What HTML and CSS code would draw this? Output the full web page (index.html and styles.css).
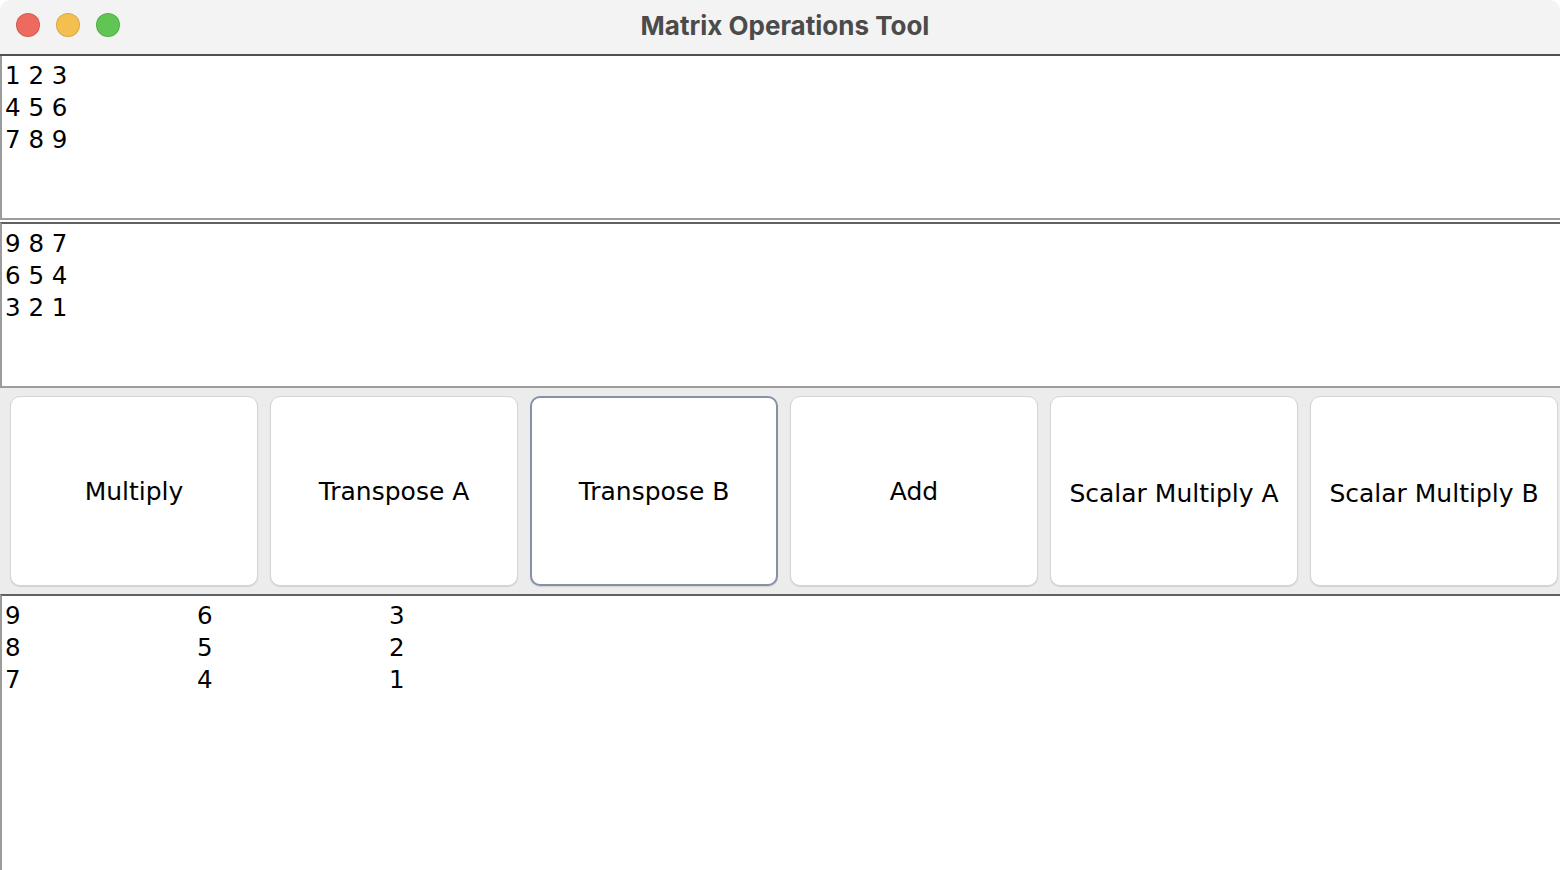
FILE: index.html
```html
<!DOCTYPE html>
<html lang="en">
<head>
  <meta charset="UTF-8">
  <title>Matrix Operations Tool</title>
  <link rel="stylesheet" href="styles.css">
</head>
<body>
  <div class="window">
    <header class="titlebar">
      <div class="lights">
        <span class="light red"></span>
        <span class="light yellow"></span>
        <span class="light green"></span>
      </div>
      <h1>Matrix Operations Tool</h1>
    </header>
    <div class="area area-a">
      <div>1 2 3</div>
      <div>4 5 6</div>
      <div>7 8 9</div>
    </div>
    <div class="area area-b">
      <div>9 8 7</div>
      <div>6 5 4</div>
      <div>3 2 1</div>
    </div>
    <div class="buttons">
      <button>Multiply</button>
      <button>Transpose A</button>
      <button class="focused">Transpose B</button>
      <button>Add</button>
      <button class="low">Scalar Multiply A</button>
      <button class="low">Scalar Multiply B</button>
    </div>
    <div class="area result">
      <div class="row"><span>9</span><span>6</span><span>3</span></div>
      <div class="row"><span>8</span><span>5</span><span>2</span></div>
      <div class="row"><span>7</span><span>4</span><span>1</span></div>
    </div>
  </div>
</body>
</html>
```

FILE: styles.css
```css
body {
  margin: 0;
  background: #fff;
  font-family: "DejaVu Sans", Verdana, sans-serif;
  color: #000;
}
.window {
  width: 1560px;
  height: 870px;
  display: flex;
  flex-direction: column;
  overflow: hidden;
  background: #fff;
}
.titlebar {
  position: relative;
  height: 54px;
  flex: none;
  background: #f2f3f2;
  border-radius: 11px 11px 0 0;
  border-bottom: 2px solid #505050;
  display: flex;
  align-items: center;
  justify-content: center;
}
.titlebar h1 {
  margin: 0 0 4px 10px;
  font-family: Inter, "Noto Sans", sans-serif;
  font-weight: 700;
  font-size: 26px;
  color: #4b4b4b;
}
.lights {
  position: absolute;
  left: 16px;
  top: 13px;
  display: flex;
  gap: 16px;
}
.light {
  width: 22px;
  height: 22px;
  border-radius: 50%;
  border: 1px solid rgba(0, 0, 0, 0.12);
}
.red { background: #ed6a5e; }
.yellow { background: #f5bf4f; }
.green { background: #61c554; }

.area {
  font-size: 24.5px;
  line-height: 32px;
  padding: 4px 0 0 3px;
  border-left: 2px solid #9c9c9c;
  box-sizing: border-box;
}
.area-a {
  height: 164px;
  border-bottom: 2px solid #9c9c9c;
  margin-bottom: 2px;
}
.area-b {
  height: 166px;
  border-top: 2px solid #606060;
  border-bottom: 2px solid #9c9c9c;
}
.buttons {
  flex: none;
  height: 206px;
  box-sizing: border-box;
  background: #ececec;
  display: flex;
  gap: 12px;
  padding: 8px 2px 8px 10px;
}
.buttons button {
  flex: none;
  width: 248px;
  height: 190px;
  box-sizing: border-box;
  background: #fff;
  border: 1px solid #d4d4d4;
  border-radius: 10px;
  box-shadow: 0 1px 1px rgba(0, 0, 0, 0.12);
  font-family: "DejaVu Sans", Verdana, sans-serif;
  font-size: 25px;
  color: #000;
  padding: 0;
}
.buttons button.low {
  padding-top: 4px;
}
.buttons button.focused {
  border: 2px solid #8492a8;
}
.result {
  flex: 1;
  border-top: 2px solid #606060;
}
.row {
  display: grid;
  grid-template-columns: 192px 192px 192px;
}
```
